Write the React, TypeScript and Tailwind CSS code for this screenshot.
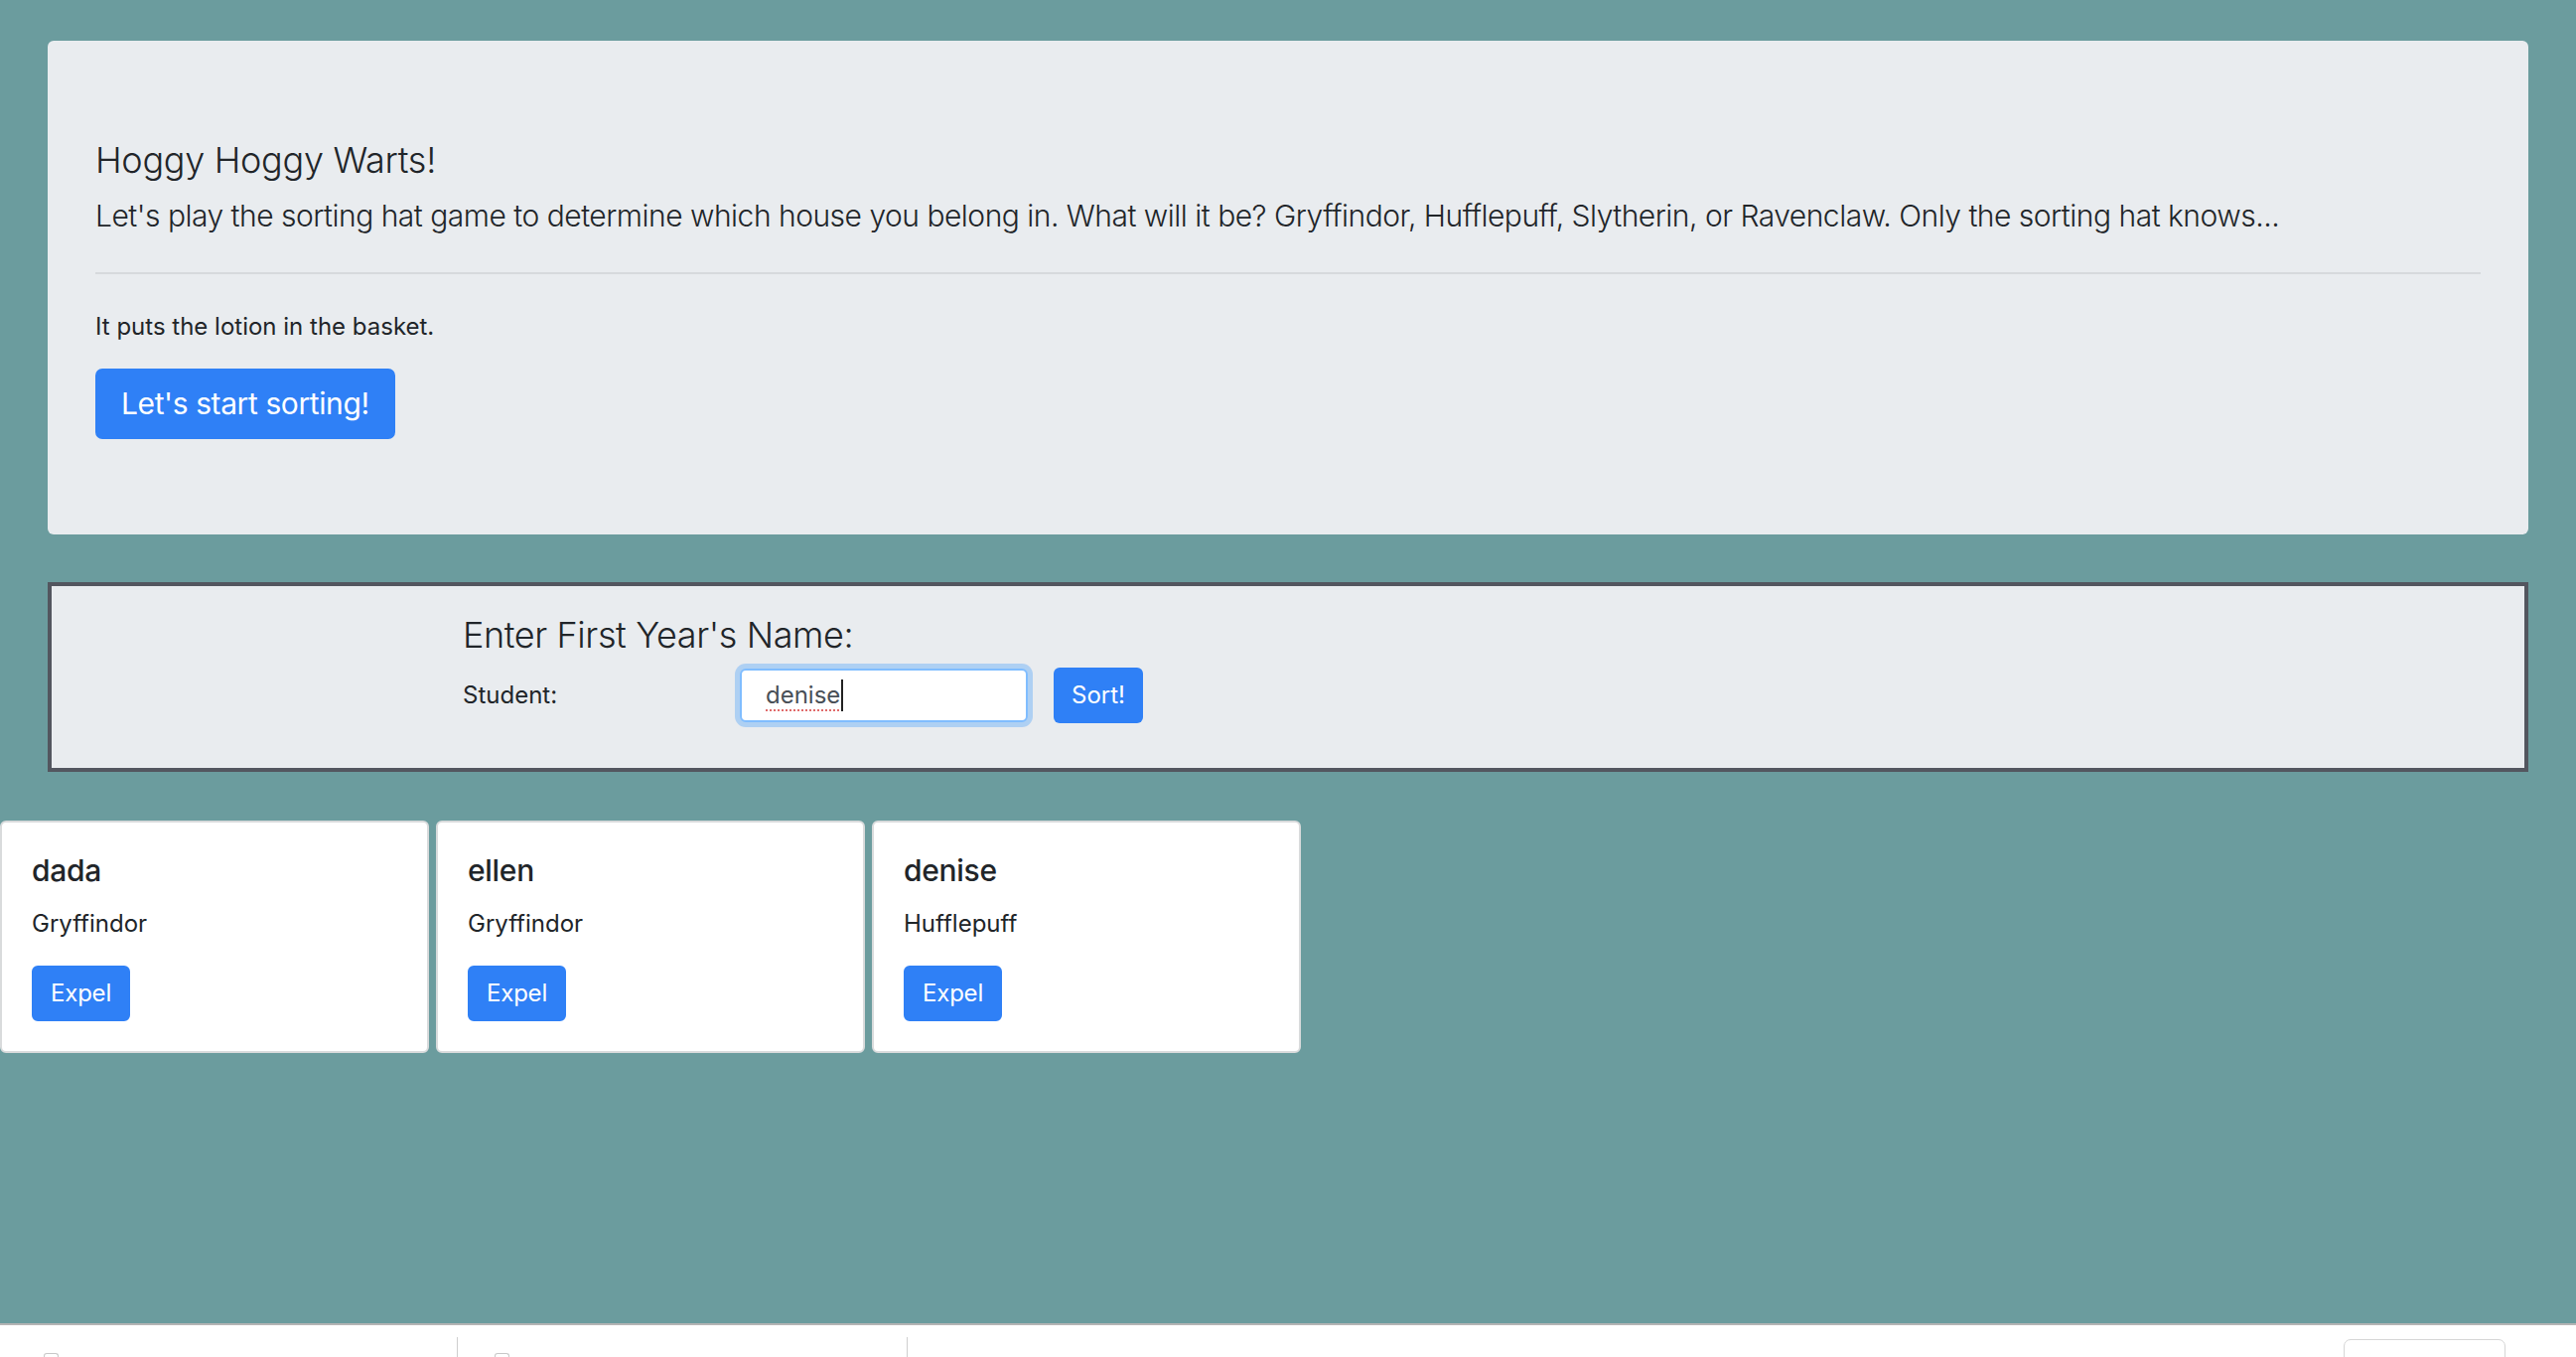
import React from "react";

const students = [
  { name: "dada", house: "Gryffindor" },
  { name: "ellen", house: "Gryffindor" },
  { name: "denise", house: "Hufflepuff" },
];

function StudentCard({ name, house }: { name: string; house: string }) {
  return (
    <div className="w-[432px] rounded-[6px] border-2 border-[#d9dbdc] bg-white p-[30px]">
      <h5 className="mb-[18px] text-[30px] font-medium leading-[36px] tracking-[-0.3px] text-[#212529]">{name}</h5>
      <p className="mb-[24px] text-[24px] leading-[36px] text-[#212529]">{house}</p>
      <button className="rounded-[6px] border-2 border-[#2f80f6] bg-[#2f80f6] px-[17px] py-[8px] text-[24px] leading-[36px] tracking-[-0.2px] text-white">
        Expel
      </button>
    </div>
  );
}

export default function App() {
  return (
    <div className="flex min-h-[1366px] flex-col bg-[#6b9c9e] font-['Inter','Noto_Sans',sans-serif] text-[#212529]">
      <div className="flex-1 pt-[41px]">
        <div className="mx-[48px] rounded-[6px] bg-[#e9ecef] px-[48px] py-[96px]">
          <h1 className="mb-[12px] mt-[3px] text-[36px] font-light leading-[43px] tracking-[-0.3px]">Hoggy Hoggy Warts!</h1>
          <p className="text-[30px] font-light leading-[45px] tracking-[-0.5px]">
            Let's play the sorting hat game to determine which house you belong in. What will it be? Gryffindor,
            Hufflepuff, Slytherin, or Ravenclaw. Only the sorting hat knows...
          </p>
          <div className="mb-[35px] mt-[34px] h-[2px] bg-black/[0.08]" />
          <p className="mb-[24px] text-[24px] leading-[36px]">It puts the lotion in the basket.</p>
          <button className="rounded-[7px] border-2 border-[#2f80f6] bg-[#2f80f6] px-[24px] py-[11px] text-[30px] leading-[45px] tracking-[-0.4px] text-white">
            Let's start sorting!
          </button>
        </div>

        <div className="mx-[48px] mt-[48px] border-[4px] border-[#53565f] bg-[#e9ecef] pb-[45px] pl-[414px] pt-[28px]">
          <h4 className="mb-[11px] text-[36px] font-light leading-[43px] tracking-[-0.4px]">Enter First Year's Name:</h4>
          <div className="flex items-center">
            <label className="w-[279px] text-[24px] leading-[36px]">Student:</label>
            <div className="flex h-[54px] w-[290px] items-center rounded-[6px] border-2 border-[#80bdff] bg-white pl-[24px] shadow-[0_0_0_5px_rgba(0,123,255,0.25)]">
              <span className="text-[24px] leading-[36px] text-[#495057] underline decoration-[#e06a6a] decoration-dotted decoration-2 underline-offset-[6px]">
                denise
              </span>
              <span className="ml-[1px] h-[32px] w-[2px] bg-[#222]" />
            </div>
            <button className="ml-[26px] h-[56px] rounded-[6px] bg-[#2f80f6] px-[18px] text-[24px] leading-[36px] text-white">
              Sort!
            </button>
          </div>
        </div>

        <div className="mt-[49px] flex gap-[7px]">
          {students.map((s) => (
            <StudentCard key={s.name} name={s.name} house={s.house} />
          ))}
        </div>
      </div>

      <div className="relative h-[34px] border-t-2 border-[#b4b4b4] bg-white">
        <div className="absolute left-[44px] top-[28px] h-[4px] w-[15px] rounded-t-[3px] border border-b-0 border-[#c8c8c8]" />
        <div className="absolute left-[460px] top-[12px] h-[20px] w-[1px] bg-[#cfcfcf]" />
        <div className="absolute left-[498px] top-[28px] h-[4px] w-[15px] rounded-t-[3px] border border-b-0 border-[#c8c8c8]" />
        <div className="absolute left-[913px] top-[12px] h-[20px] w-[1px] bg-[#cfcfcf]" />
        <div className="absolute left-[2360px] top-[14px] h-[30px] w-[163px] rounded-[7px] border border-[#d6d6d6]" />
      </div>
    </div>
  );
}
